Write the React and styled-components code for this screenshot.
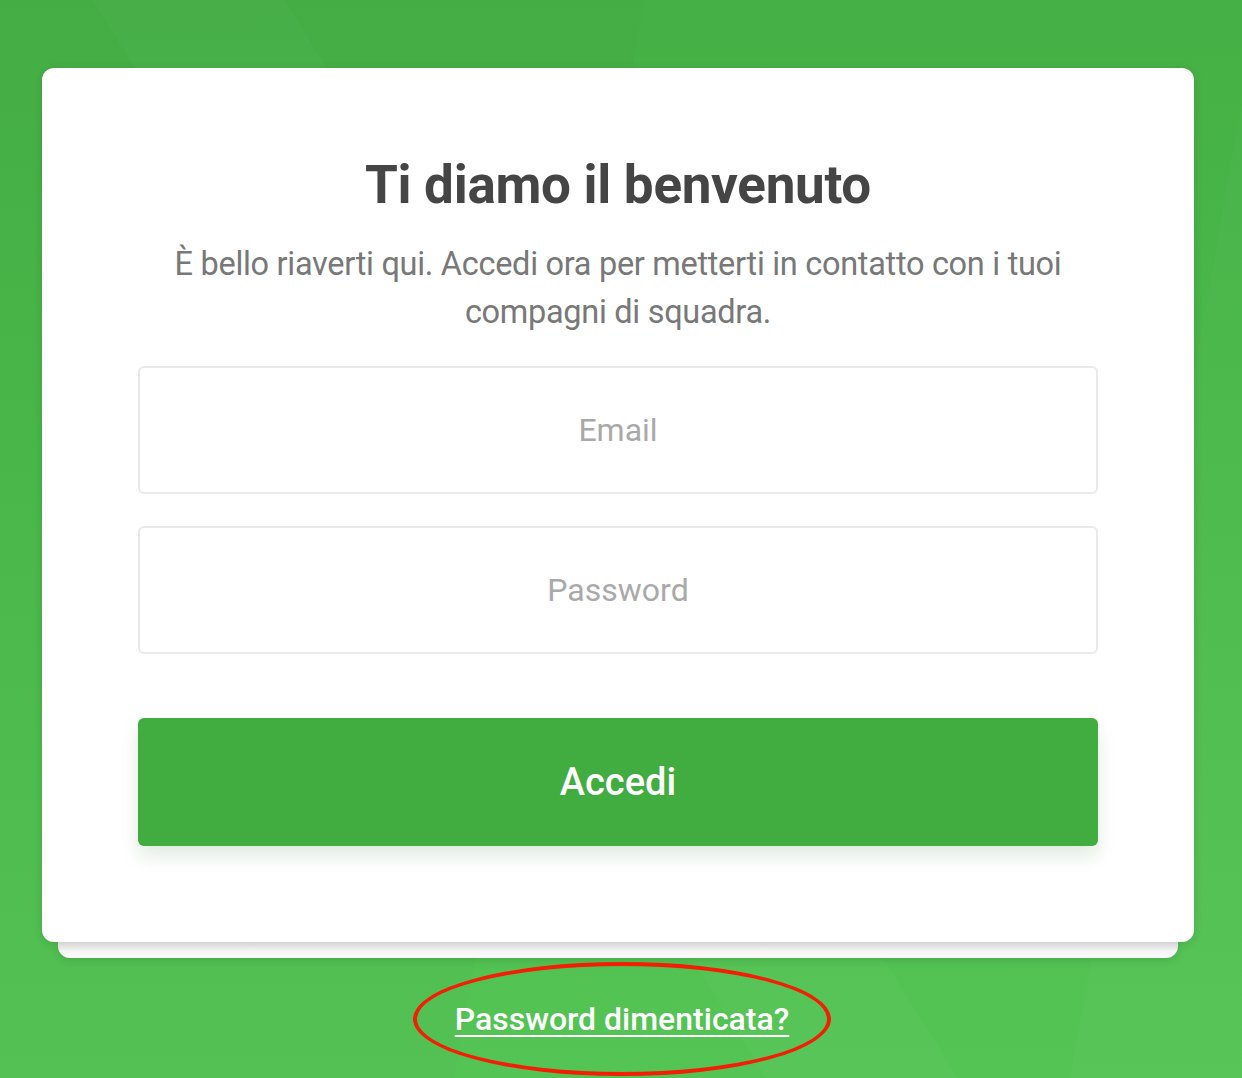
import React from 'react';
import styled, { createGlobalStyle } from 'styled-components';

const GlobalStyle = createGlobalStyle`
  html, body {
    margin: 0;
    padding: 0;
  }
  body {
    font-family: Roboto, "Open Sans", sans-serif;
    background: #4ab84b;
  }
`;

const Page = styled.div`
  min-height: 1078px;
  box-sizing: border-box;
  padding: 68px 48px 0 42px;
  background:
    linear-gradient(58deg, transparent 0 40%, rgba(255,255,255,0.02) 40% 50%, transparent 50%),
    linear-gradient(100deg, rgba(0,0,0,0.015) 0 45%, transparent 45% 88%, rgba(255,255,255,0.015) 88%),
    linear-gradient(180deg, #45b045 0%, #4aba4b 45%, #54c454 100%);
  overflow: hidden;
`;

const Card = styled.div`
  position: relative;
  z-index: 1;
  background: #fff;
  border-radius: 12px;
  box-shadow: 0 2px 10px rgba(0, 0, 0, 0.12);
  padding: 84px 96px 96px;
  display: flex;
  flex-direction: column;
  align-items: center;
`;

const Ledge = styled.div`
  height: 16px;
  margin: 0 16px;
  border-radius: 0 0 12px 12px;
  background: linear-gradient(180deg, #e6e6e6 0%, #f6f6f6 60%, #fbfbfb 100%);
  box-shadow: 0 3px 8px rgba(0, 0, 0, 0.1);
`;

const Title = styled.h1`
  margin: 0;
  font-size: 53px;
  line-height: 66px;
  font-weight: 700;
  color: #454545;
  letter-spacing: -0.3px;
`;

const Subtitle = styled.p`
  margin: 22px 0 30px;
  max-width: 960px;
  font-size: 32.5px;
  line-height: 48px;
  font-weight: 400;
  color: #787878;
  text-align: center;
  letter-spacing: -0.3px;
`;

const Form = styled.form`
  width: 100%;
  display: flex;
  flex-direction: column;
  gap: 32px;
`;

const Field = styled.input`
  box-sizing: border-box;
  width: 100%;
  height: 128px;
  border: 2px solid #e9e9e9;
  border-radius: 6px;
  background: #fff;
  font-family: inherit;
  font-size: 32px;
  color: #444;
  text-align: center;
  outline: none;

  &::placeholder {
    color: #a9a9a9;
  }
`;

const Submit = styled.button`
  margin-top: 32px;
  width: 100%;
  height: 128px;
  border: none;
  border-radius: 6px;
  background: #41ad40;
  color: #fff;
  font-family: inherit;
  font-size: 38px;
  font-weight: 500;
  cursor: pointer;
  box-shadow: 0 10px 18px rgba(40, 120, 40, 0.14);
`;

const Footer = styled.div`
  display: flex;
  justify-content: center;
  padding-top: 4px;
`;

const Circled = styled.div`
  width: 410px;
  height: 106px;
  border: 4px solid #f41d05;
  border-radius: 50%;
  display: flex;
  align-items: center;
  justify-content: center;
  margin-left: 8px;
`;

const ForgotLink = styled.a`
  color: #fff;
  font-size: 32px;
  font-weight: 500;
  text-decoration: underline;
  text-decoration-thickness: 2px;
  text-underline-offset: 5px;
  cursor: pointer;
`;

const App = () => {
    return (
        <>
            <GlobalStyle />
            <Page>
                <Card>
                    <Title>Ti diamo il benvenuto</Title>
                    <Subtitle>
                        È bello riaverti qui. Accedi ora per metterti in contatto con i tuoi compagni di squadra.
                    </Subtitle>
                    <Form onSubmit={e => e.preventDefault()}>
                        <Field type="email" placeholder="Email" />
                        <Field type="password" placeholder="Password" />
                        <Submit type="submit">Accedi</Submit>
                    </Form>
                </Card>
                <Ledge />
                <Footer>
                    <Circled>
                        <ForgotLink>Password dimenticata?</ForgotLink>
                    </Circled>
                </Footer>
            </Page>
        </>
    );
}

export default App;
